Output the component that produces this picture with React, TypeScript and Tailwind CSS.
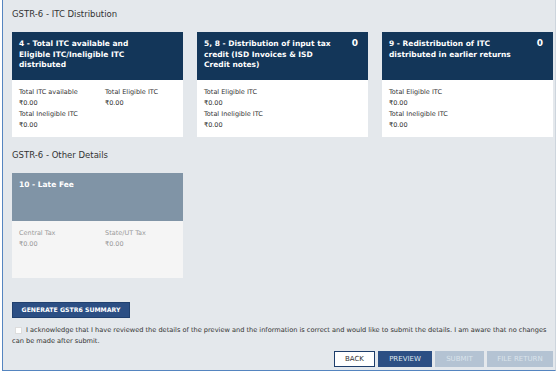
import React from "react";

const font = { fontFamily: '"DejaVu Sans", Verdana, sans-serif' };

type Row = { label: string; value: string };

function ItcCard({ title, count, left, right, muted }: { title: string; count?: string; left: Row[]; right?: Row[]; muted?: boolean }) {
  const head = muted ? "bg-[#8094a6]" : "bg-[#133659]";
  const body = muted ? "bg-[#f5f5f5] text-[#9a9a9a]" : "bg-white text-[#333333]";
  return (
    <div className="w-[171px] h-[105px] flex flex-col">
      <div className={`${head} h-[48px] px-[7px] pt-[7px] flex justify-between text-white`}>
        <div className="text-[7.5px] font-bold leading-[10.5px] w-[130px]">{title}</div>
        {count && <div className="text-[9px] font-bold leading-[10px] pr-[3px] -mt-[1px]">{count}</div>}
      </div>
      <div className={`${body} flex-1 px-[7px] pt-[7px] grid grid-cols-[86px_1fr] content-start`}>
        <div>
          {left.map((r) => (
            <div key={r.label} className="text-[6.5px] leading-[11px]">
              <div>{r.label}</div>
              <div>{r.value}</div>
            </div>
          ))}
        </div>
        <div>
          {right?.map((r) => (
            <div key={r.label} className="text-[6.5px] leading-[11px]">
              <div>{r.label}</div>
              <div>{r.value}</div>
            </div>
          ))}
        </div>
      </div>
    </div>
  );
}

export default function App() {
  return (
    <div className="w-[557px] h-[373px] bg-white overflow-hidden" style={font}>
      <div className="ml-[2px] w-[554px] h-[371px] bg-[#e4e8ec] border-l border-b border-[#5585c0] border-r border-r-[#cdd5dd] pl-[9px] pt-[9px] flex flex-col">
        <div className="text-[8.5px] text-[#333333] leading-[10px]">GSTR-6 - ITC Distribution</div>
        <div className="flex gap-[14px] mt-[13px]">
          <ItcCard
            title="4 - Total ITC available and Eligible ITC/Ineligible ITC distributed"
            left={[
              { label: "Total ITC available", value: "₹0.00" },
              { label: "Total Ineligible ITC", value: "₹0.00" },
            ]}
            right={[{ label: "Total Eligible ITC", value: "₹0.00" }]}
          />
          <ItcCard
            title="5, 8 - Distribution of input tax credit (ISD Invoices & ISD Credit notes)"
            count="0"
            left={[
              { label: "Total Eligible ITC", value: "₹0.00" },
              { label: "Total Ineligible ITC", value: "₹0.00" },
            ]}
          />
          <ItcCard
            title="9 - Redistribution of ITC distributed in earlier returns"
            count="0"
            left={[
              { label: "Total Eligible ITC", value: "₹0.00" },
              { label: "Total Ineligible ITC", value: "₹0.00" },
            ]}
          />
        </div>

        <div className="text-[8.5px] text-[#333333] leading-[10px] mt-[13px]">GSTR-6 - Other Details</div>
        <div className="mt-[13px]">
          <ItcCard
            title="10 - Late Fee"
            muted
            left={[{ label: "Central Tax", value: "₹0.00" }]}
            right={[{ label: "State/UT Tax", value: "₹0.00" }]}
          />
        </div>

        <button className="mt-[24px] w-[118px] h-[16px] bg-[#2c4f84] border border-[#20406e] text-white text-[6.2px] font-bold">
          GENERATE GSTR6 SUMMARY
        </button>

        <div className="mt-[7px] pr-[8px] text-[6.6px] leading-[11px] text-[#333333]">
          <span className="inline-block w-[7px] h-[7px] bg-white border border-[#dddddd] align-middle ml-[3px] mr-[4px]" />
          I acknowledge that I have reviewed the details of the preview and the information is correct and would like to submit the details. I am aware that no changes can be made after submit.
        </div>

        <div className="flex justify-end gap-[3px] mt-[4px] pr-[2px]">
          <button className="w-[41px] h-[16px] bg-white border border-[#1d3d6b] text-[#333333] text-[7px]">BACK</button>
          <button className="w-[54px] h-[16px] bg-[#2c4f84] text-[#dfe6ef] text-[7px]">PREVIEW</button>
          <button className="w-[49px] h-[16px] bg-[#b4c3d3] text-[#dbe3ec] text-[7px]">SUBMIT</button>
          <button className="w-[66px] h-[16px] bg-[#b4c3d3] text-[#dbe3ec] text-[7px]">FILE RETURN</button>
        </div>
      </div>
    </div>
  );
}
